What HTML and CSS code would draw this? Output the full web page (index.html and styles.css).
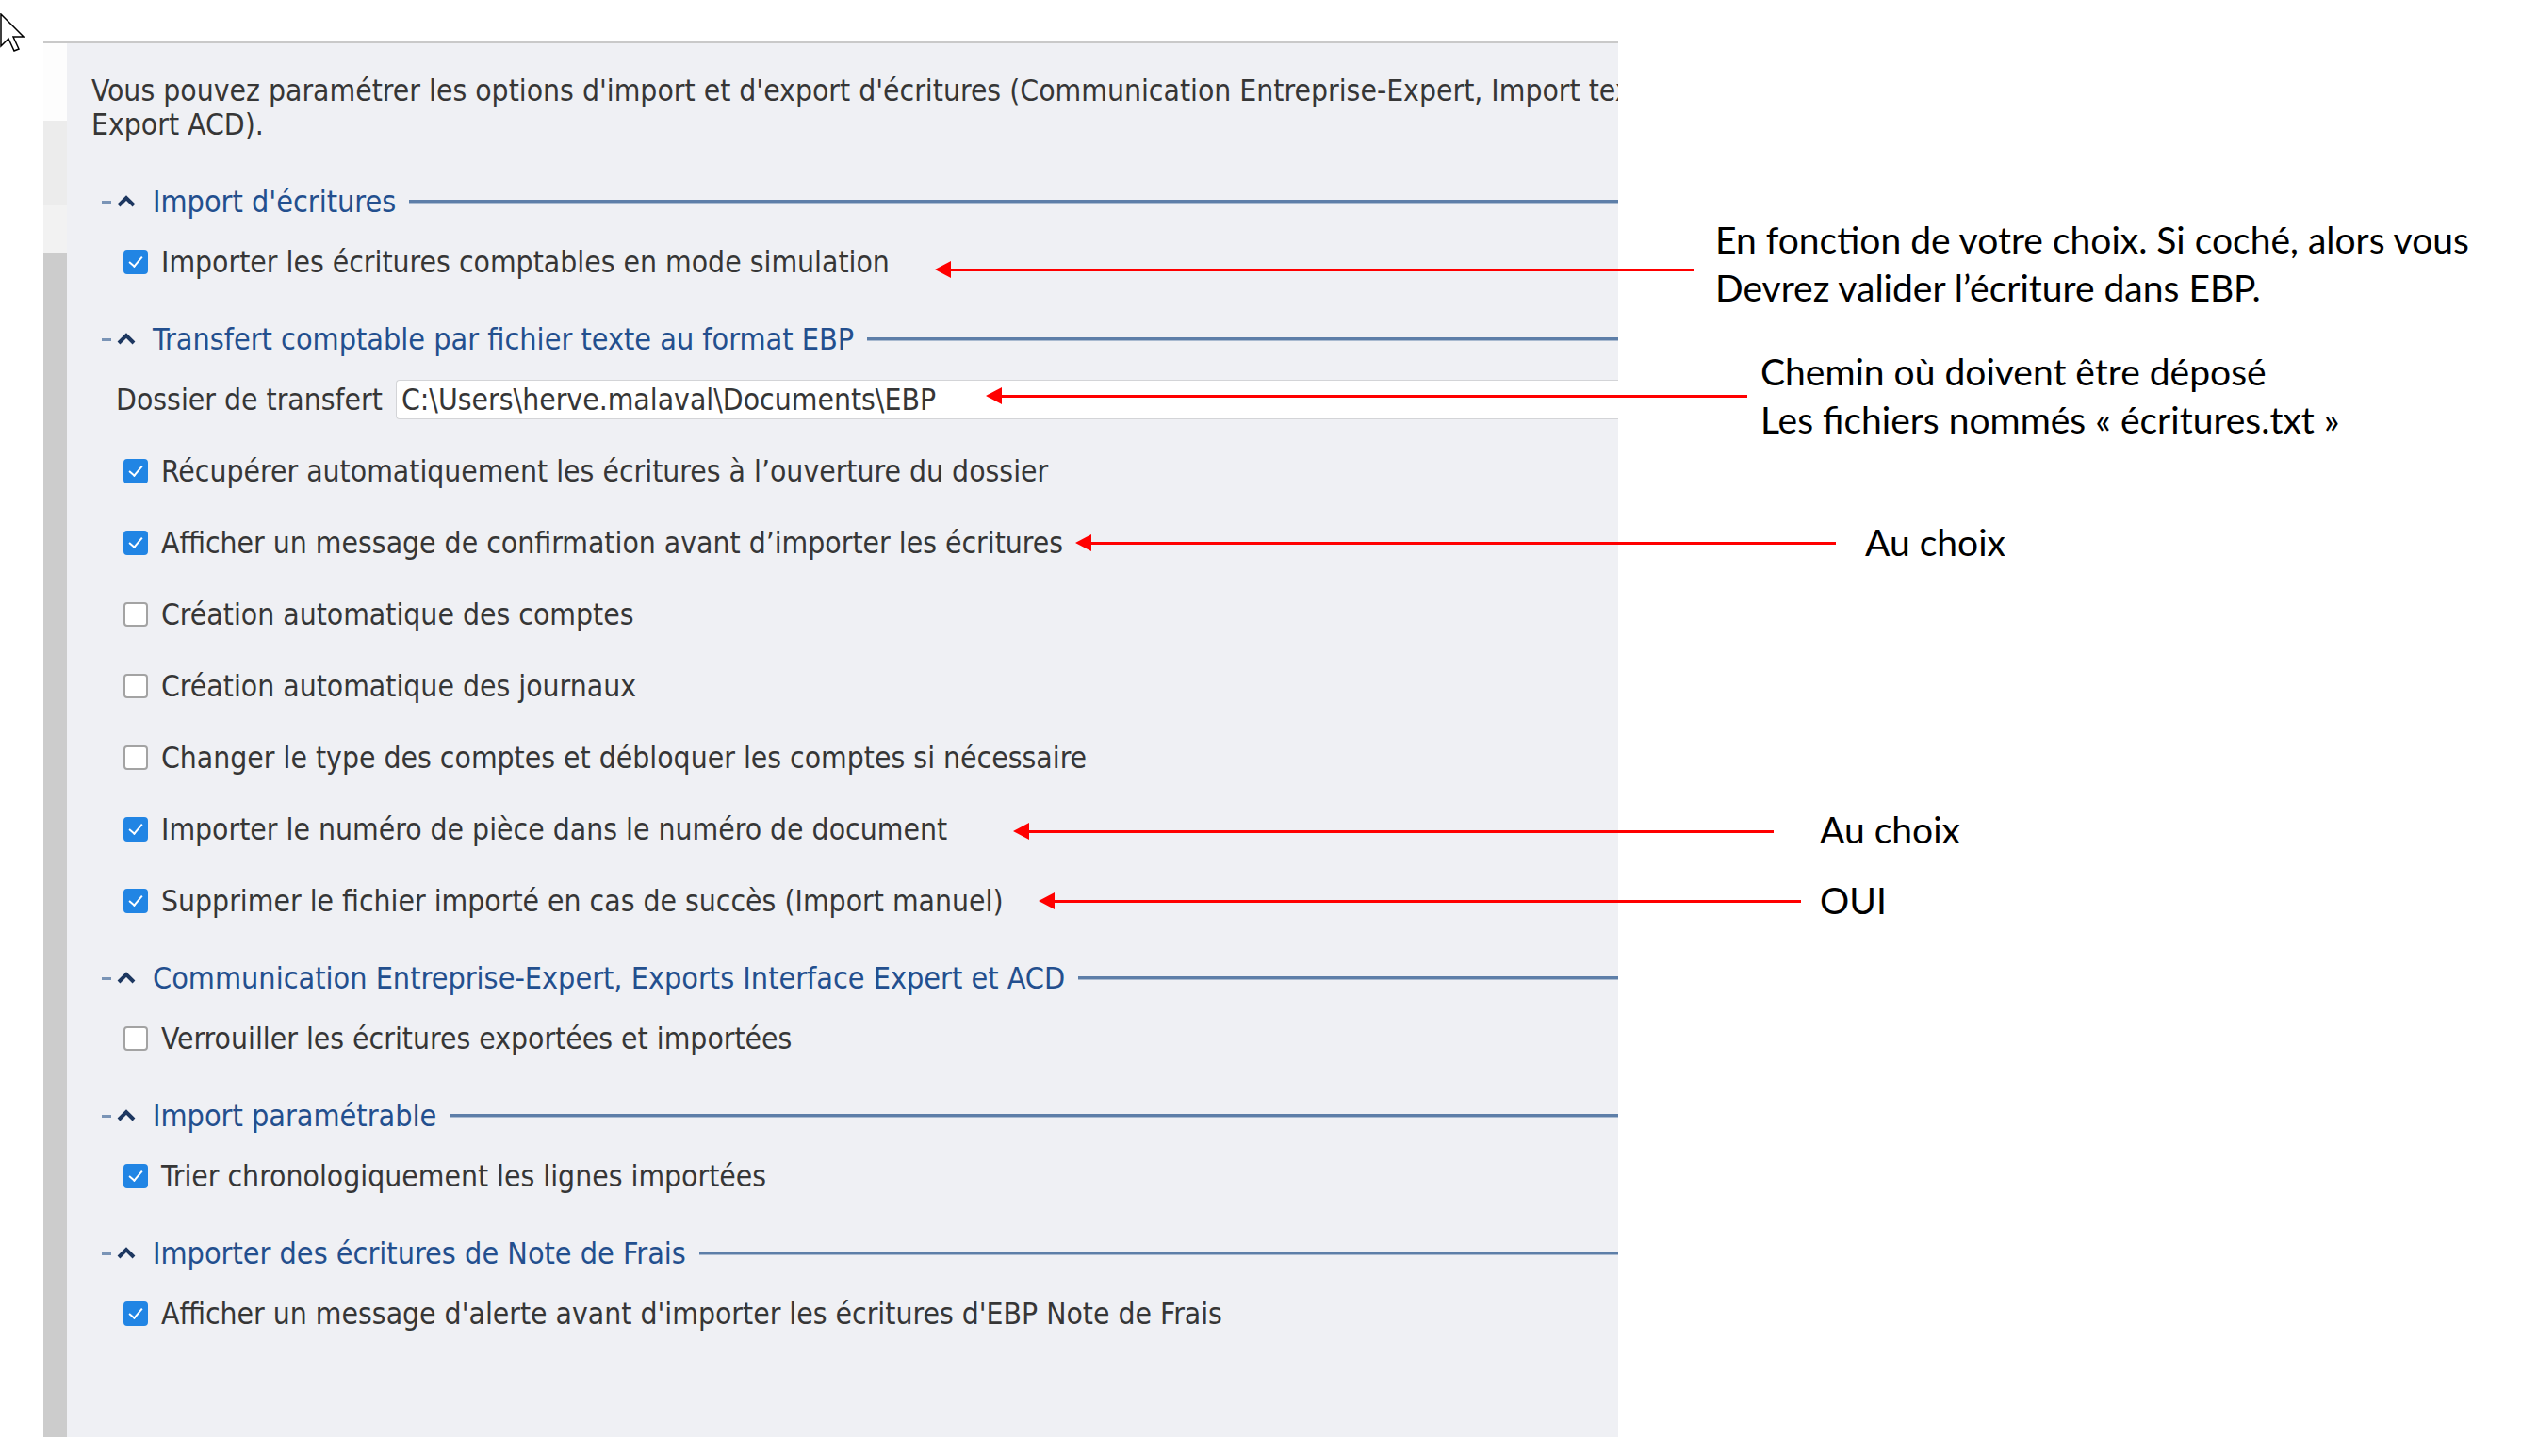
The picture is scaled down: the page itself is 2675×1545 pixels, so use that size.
FILE: index.html
```html
<!DOCTYPE html>
<html lang="fr">
<head>
    <meta charset="UTF-8">
    <title>Options d'import et d'export</title>
    <link rel="stylesheet" href="styles.css">
</head>
<body>
    <svg class="cursor" width="28" height="42" viewBox="0 0 28 42">
        <polygon points="1,1 1,35 9,27 15,40 20,38 14,25 25,25" fill="#fff" stroke="#000" stroke-width="1.5" stroke-linejoin="miter"/>
    </svg>

    <div class="window">
        <div class="sidebar">
            <div class="seg seg-white"></div>
            <div class="seg seg-light"></div>
            <div class="seg seg-lighter"></div>
            <div class="seg seg-dark"></div>
        </div>

        <div class="panel">
            <p class="intro">Vous pouvez paramétrer les options d'import et d'export d'écritures (Communication Entreprise-Expert, Import texte,<br>Export ACD).</p>

            <div class="section">
                <div class="section-head">
                    <span class="dash"></span>
                    <svg class="caret" width="22" height="14" viewBox="0 0 22 14"><polyline points="3,11 11,3 19,11" fill="none" stroke="#1d3760" stroke-width="4"/></svg>
                    <span class="title">Import d'écritures</span>
                    <span class="rule"></span>
                </div>
                <div class="option"><span class="box checked"></span>Importer les écritures comptables en mode simulation</div>
            </div>

            <div class="section">
                <div class="section-head">
                    <span class="dash"></span>
                    <svg class="caret" width="22" height="14" viewBox="0 0 22 14"><polyline points="3,11 11,3 19,11" fill="none" stroke="#1d3760" stroke-width="4"/></svg>
                    <span class="title">Transfert comptable par fichier texte au format EBP</span>
                    <span class="rule"></span>
                </div>
                <div class="option field">
                    <span class="field-label">Dossier de transfert</span>
                    <span class="field-input">C:\Users\herve.malaval\Documents\EBP</span>
                </div>
                <div class="option"><span class="box checked"></span>Récupérer automatiquement les écritures à l’ouverture du dossier</div>
                <div class="option"><span class="box checked"></span>Afficher un message de confirmation avant d’importer les écritures</div>
                <div class="option"><span class="box"></span>Création automatique des comptes</div>
                <div class="option"><span class="box"></span>Création automatique des journaux</div>
                <div class="option"><span class="box"></span>Changer le type des comptes et débloquer les comptes si nécessaire</div>
                <div class="option"><span class="box checked"></span>Importer le numéro de pièce dans le numéro de document</div>
                <div class="option"><span class="box checked"></span>Supprimer le fichier importé en cas de succès (Import manuel)</div>
            </div>

            <div class="section">
                <div class="section-head">
                    <span class="dash"></span>
                    <svg class="caret" width="22" height="14" viewBox="0 0 22 14"><polyline points="3,11 11,3 19,11" fill="none" stroke="#1d3760" stroke-width="4"/></svg>
                    <span class="title">Communication Entreprise-Expert, Exports Interface Expert et ACD</span>
                    <span class="rule"></span>
                </div>
                <div class="option"><span class="box"></span>Verrouiller les écritures exportées et importées</div>
            </div>

            <div class="section">
                <div class="section-head">
                    <span class="dash"></span>
                    <svg class="caret" width="22" height="14" viewBox="0 0 22 14"><polyline points="3,11 11,3 19,11" fill="none" stroke="#1d3760" stroke-width="4"/></svg>
                    <span class="title">Import paramétrable</span>
                    <span class="rule"></span>
                </div>
                <div class="option"><span class="box checked"></span>Trier chronologiquement les lignes importées</div>
            </div>

            <div class="section">
                <div class="section-head">
                    <span class="dash"></span>
                    <svg class="caret" width="22" height="14" viewBox="0 0 22 14"><polyline points="3,11 11,3 19,11" fill="none" stroke="#1d3760" stroke-width="4"/></svg>
                    <span class="title">Importer des écritures de Note de Frais</span>
                    <span class="rule"></span>
                </div>
                <div class="option"><span class="box checked"></span>Afficher un message d'alerte avant d'importer les écritures d'EBP Note de Frais</div>
            </div>
        </div>
    </div>

    <!-- annotations posees sur la capture -->
    <div class="arrow arrow-1"></div>
    <div class="arrow arrow-2"></div>
    <div class="arrow arrow-3"></div>
    <div class="arrow arrow-4"></div>
    <div class="arrow arrow-5"></div>

    <p class="note note-1">En fonction de votre choix. Si coché, alors vous<br>Devrez valider l’écriture dans EBP.</p>
    <p class="note note-2">Chemin où doivent être déposé<br>Les fichiers nommés « écritures.txt »</p>
    <p class="note note-3">Au choix</p>
    <p class="note note-4">Au choix</p>
    <p class="note note-5">OUI</p>
</body>
</html>
```

FILE: styles.css
```css
body {
    margin: 0;
    width: 2675px;
    height: 1545px;
    background: #fff;
    position: relative;
    overflow: hidden;
    font-family: "DejaVu Sans Condensed", "DejaVu Sans", sans-serif;
}
.cursor {
    position: absolute;
    left: 0;
    top: 14px;
}

/* fenetre d'options */
.window {
    display: flex;
    margin: 43px 0 0 46px;
    width: 1671px;
    height: 1479px;
    border-top: 3px solid #c9c9c9;
}
.sidebar {
    width: 25px;
    display: flex;
    flex-direction: column;
}
.seg-white { height: 82px; background: #fdfdfd; }
.seg-light { height: 90px; background: #ececec; }
.seg-lighter { height: 50px; background: #f2f2f2; }
.seg-dark { flex: 1; background: #cccccc; }

.panel {
    flex: 1;
    background: #eff0f4;
    overflow: hidden;
    padding: 32px 0 0 26px;
    color: #363636;
    font-size: 31.6px;
}
.intro {
    margin: 0 0 38px 0;
    line-height: 36px;
    white-space: nowrap;
}

.section {
    margin-bottom: 18px;
}
.section-head {
    display: flex;
    align-items: center;
    height: 52px;
    padding-left: 11px;
}
.dash {
    width: 10px;
    height: 3px;
    background: #7a94b6;
    margin-right: 5px;
}
.caret {
    margin-right: 17px;
}
.title {
    color: #234f8e;
    font-size: 32.1px;
    white-space: nowrap;
}
.rule {
    flex: 1;
    height: 3px;
    margin-left: 14px;
    background: #5d7ea8;
    border-bottom: 1px solid #a9bad0;
}

.option {
    display: flex;
    align-items: center;
    height: 76px;
    padding-left: 34px;
    white-space: nowrap;
}
.box {
    width: 22px;
    height: 22px;
    border: 2px solid #a3a3a3;
    border-radius: 4px;
    background: #fff;
    margin-right: 14px;
    position: relative;
    flex: none;
}
.box.checked {
    background: #2185e4;
    border-color: #2185e4;
}
.box.checked::after {
    content: "";
    position: absolute;
    left: 7px;
    top: 2px;
    width: 6px;
    height: 12px;
    border-right: 2px solid #fff;
    border-bottom: 2px solid #fff;
    transform: rotate(40deg);
}

.field {
    padding-left: 26px;
}
.field-label {
    margin-right: 14px;
}
.field-input {
    flex: none;
    width: 1500px;
    height: 40px;
    line-height: 40px;
    padding-left: 5px;
    background: #fff;
    border: 1px solid #d3d4d7;
    border-right: none;
    border-radius: 4px 0 0 4px;
}

/* fleches et commentaires */
.arrow {
    position: absolute;
    height: 3px;
    background: #ff0000;
}
.arrow::before {
    content: "";
    position: absolute;
    left: -16px;
    top: -8px;
    border-right: 17px solid #ff0000;
    border-top: 9px solid transparent;
    border-bottom: 9px solid transparent;
}
.arrow-1 { left: 1008px; top: 285px; width: 790px; }
.arrow-2 { left: 1062px; top: 419px; width: 792px; }
.arrow-3 { left: 1157px; top: 575px; width: 791px; }
.arrow-4 { left: 1091px; top: 881px; width: 791px; }
.arrow-5 { left: 1118px; top: 955px; width: 793px; }

.note {
    position: absolute;
    margin: 0;
    font-family: Lato, "Open Sans", sans-serif;
    font-size: 39px;
    line-height: 51px;
    color: #000;
    white-space: nowrap;
}
.note-1 { left: 1820px; top: 229px; }
.note-2 { left: 1868px; top: 369px; }
.note-3 { left: 1979px; top: 550px; }
.note-4 { left: 1931px; top: 855px; }
.note-5 { left: 1931px; top: 930px; }
```
